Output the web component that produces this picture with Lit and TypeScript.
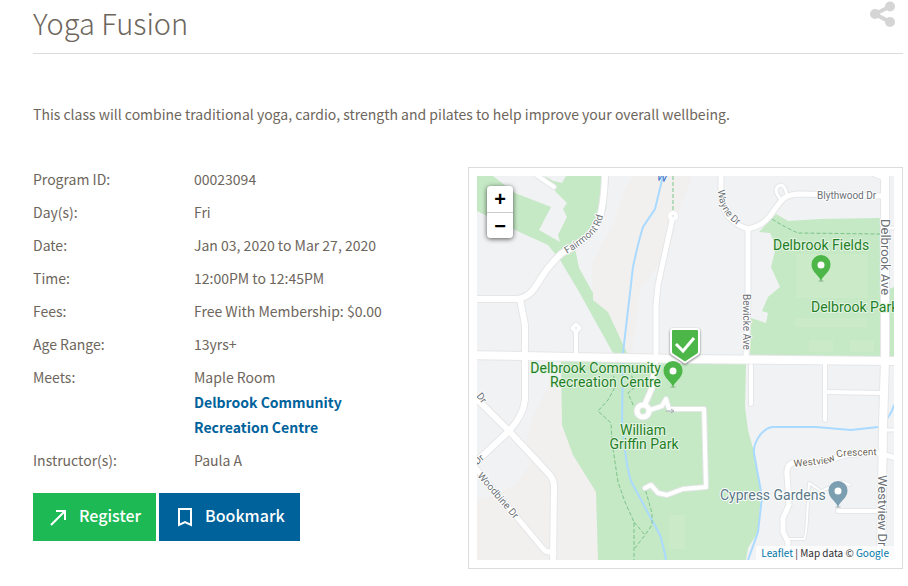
import { LitElement, html, css, svg } from "lit";
import { customElement, state } from "lit/decorators.js";

/* ---------- map data, in map units ---------- */

const terrain = [
  "632,176 622,197 612,227 592,262 592,300 608,312 627,353 632,353 640,290 660,262 676,220 692,176",
  "561,366 545,393 533,417 526,440 532,462 515,485 488,497 477,498 477,560 600,560 600,366",
];

const greens = [
  "477,176 493,176 515,193 551,207 539,230 560,242 558,235 563,225 567,217 563,209 567,203 555,191 545,176 553,181 562,183 566,176 609,176 606,210 595,232 575,248 579,268 593,293 593,300 608,312 627,353 613,353 578,290 560,260 548,245 515,230 477,211",
  "561,360 746,362 745,407 748,430 754,452 761,495 758,532 748,548 746,560 598,560 596,492 573,455 562,425",
  "776,214 788,221 820,219 881,218 881,358 750,358 751,318 766,323 768,313 762,311 768,297 780,287 771,267 776,247 770,233 759,232",
  "889,289 894,287 894,358 889,358",
];

const lawns = [
  { x: 795, y: 318, w: 72, h: 9 },
  { x: 796, y: 254, w: 72, h: 44 },
  { x: 809, y: 340, w: 24, h: 12 },
  { x: 850, y: 340, w: 24, h: 12 },
  { x: 669, y: 515, w: 16, h: 34 },
];

const rivers = [
  "M663,176 L655,209 L643,227 Q638,243 633,267 L623,353 L622,423 L625,450 Q628,475 632,483 L660,535 Q664,548 666,560",
  "M748,560 L758,532 L762,497 L754,453 Q753,445 760,435 Q767,427 773,427 L816,427 L851,430 L878,427 Q890,419 894,405",
];

const trails = [
  "M673,176 V212",
  "M772,219 Q786,228 798,233 L880,234",
  "M613,370 L615,387 L608,400 L598,411 L611,423 L612,442 L618,482 L625,502 L634,522 V560",
  "M634,522 L645,535 L635,548",
  "M644,485 L652,513 V525 L645,535",
  "M630,370 L635,387 L628,393 L634,407",
];

const roads = [
  { w: 4, d: "M529,170 L554,187" },
  { w: 4, d: "M576,353 V328" },
  { w: 5, d: "M673,216 L658,285 L656,305 L656,355 L652,388 L645,404" },
  { w: 5, d: "M637,411 a6,6 0 1 0 12,0 a6,6 0 1 0 -12,0" },
  { w: 4, d: "M650,410 L662,406 L666,399 L669,409 L704,409 L706,487 L683,489 L667,495 L658,493 L651,485 L645,488" },
  { w: 5, d: "M721,174 V193 Q723,212 730,218 Q738,226 748,229 V300 L746,357" },
  { w: 4, d: "M751,366 V404" },
  { w: 5, d: "M748,229 Q762,226 770,216 Q779,203 784,198 Q791,194 800,194 L883,196" },
  { w: 3, d: "M787,197 Q786,186 781,185 Q774,187 777,194 L781,200" },
  { w: 4, d: "M825,362 V420" },
  { w: 4, d: "M827,392 L883,393" },
  { w: 3, d: "M885,228 H896" },
  { w: 3, d: "M885,430 H896" },
  { w: 3, d: "M872,174 L884,179" },
  { w: 4, d: "M838,511 H881" },
  { w: 5, d: "M896,458 L875,452 L845,455 L820,463 L795,462 Q786,464 787,474 L789,505 L783,518 V532 L788,542 V564" },
  { w: 2, d: "M790,539 H804 Q806,538 807,518 L809,483 L821,491 L843,482 L850,485" },
  { w: 6, d: "M477,299 H518 Q528,297 534,289 L545,272 Q555,259 562,253 Q592,239 599,220 Q604,205 605,174" },
  { w: 6, d: "M520,299 L525,325 V400 Q523,416 509,431 L474,464" },
  { w: 6, d: "M474,396 L509,431 L550,475 Q554,480 554,487 L553,564" },
  { w: 5, d: "M474,466 L545,551 L554,553" },
  { w: 8, d: "M470,355 L625,358 L683,359 L900,361" },
  { w: 8, d: "M885,170 L885,360 L883,425 L881,564" },
];

const labelPaths = [
  { id: "fairmont", d: "M567,254 Q590,240 598,229 Q604,218 605,205" },
  { id: "wayne", d: "M718,190 Q719,206 727,216 Q735,226 748,230" },
  { id: "woodbine", d: "M477,476 L520,526" },
  { id: "crescent", d: "M794,467 L824,464 Q832,463 836,459 Q840,456 848,456 L880,455" },
];

const curved = [
  { path: "fairmont", text: "Fairmont Rd", size: 10, tone: "street" },
  { path: "wayne", text: "Wayne Dr", size: 10, tone: "street" },
  { path: "woodbine", text: "Woodbine Dr", size: 10, tone: "street" },
  { path: "crescent", text: "Westview Crescent", size: 10, tone: "brown" },
];

const straight = [
  { x: 817, y: 199, r: 0, size: 10, tone: "street", anchor: "start", text: "Blythwood Dr" },
  { x: 743, y: 294, r: 90, size: 10, tone: "street", anchor: "start", text: "Bewicke Ave" },
  { x: 881, y: 219, r: 90, size: 13, tone: "street", anchor: "start", text: "Delbrook Ave" },
  { x: 878, y: 475, r: 90, size: 13, tone: "street", anchor: "start", text: "Westview Dr" },
  { x: 656, y: 180, r: 12, size: 12, tone: "water", anchor: "start", text: "W" },
  { x: 773, y: 250, r: 0, size: 14, tone: "park", anchor: "start", text: "Delbrook Fields" },
  { x: 811, y: 312, r: 0, size: 14, tone: "park", anchor: "start", text: "Delbrook Park" },
  { x: 661, y: 373, r: 0, size: 14, tone: "park", anchor: "end", text: "Delbrook Community" },
  { x: 661, y: 387, r: 0, size: 14, tone: "park", anchor: "end", text: "Recreation Centre" },
  { x: 643, y: 435, r: 0, size: 14, tone: "park", anchor: "middle", text: "William" },
  { x: 644, y: 449, r: 0, size: 14, tone: "park", anchor: "middle", text: "Griffin Park" },
  { x: 720, y: 500, r: 0, size: 14, tone: "slate", anchor: "start", text: "Cypress Gardens" },
  { x: 476, y: 396, r: 52, size: 10, tone: "street", anchor: "start", text: "Dr" },
  { x: 481, y: 462, r: -42, size: 10, tone: "street", anchor: "middle", text: "Dr" },
];

const pins = [
  { x: 821, y: 265, fill: "#4cb648" },
  { x: 673, y: 371, fill: "#4cb648" },
  { x: 838, y: 491, fill: "#7b9eb0" },
];

@customElement("program-map")
export class ProgramMap extends LitElement {
  @state() private zoom = 0;

  static styles = css`
    :host {
      display: block;
      border: 1px solid #dcdcdc;
      padding: 8px;
    }
    .view {
      position: relative;
      overflow: hidden;
      height: 384px;
      background: #f1f2f4;
    }
    .tiles {
      display: block;
      width: 100%;
      height: 100%;
    }
    .terrain { fill: #f1f0ef; }
    .green { fill: #c5e8c5; }
    .lawn { fill: #cbeac8; }
    .river { fill: none; stroke: #aadaff; stroke-width: 2; }
    .trail { fill: none; stroke: #7cc48a; stroke-width: 1; stroke-dasharray: 4 2; }
    .casing { fill: none; stroke: #e5e6e8; stroke-linecap: round; stroke-linejoin: round; }
    .road { fill: none; stroke: #fff; stroke-linecap: round; stroke-linejoin: round; }
    .label {
      font-family: Roboto, sans-serif;
      paint-order: stroke;
      stroke: #fff;
      stroke-width: 2;
      stroke-linejoin: round;
    }
    .street { fill: #6b7075; }
    .brown { fill: #6b6458; }
    .water { fill: #3f76c8; stroke: none; }
    .park { fill: #1f7f25; stroke: #e6f5e5; }
    .slate { fill: #5a7888; }
    .badge { fill: #4cb748; stroke: #fff; stroke-width: 2; filter: drop-shadow(0 1px 1px rgba(0, 0, 0, 0.5)); }
    .tick { fill: none; stroke: #fff; stroke-width: 3; }
    .zoom {
      position: absolute;
      left: 10px;
      top: 10px;
      width: 26px;
      border-radius: 4px;
      overflow: hidden;
      box-shadow: 0 1px 5px rgba(0, 0, 0, 0.65);
    }
    .step {
      display: block;
      box-sizing: border-box;
      width: 26px;
      height: 26px;
      margin: 0;
      padding: 0;
      border: 0;
      background: #fff;
      color: #000;
      font: bold 20px/26px "Liberation Sans", Arial, sans-serif;
      text-align: center;
      cursor: pointer;
    }
    .step + .step { border-top: 1px solid #ccc; }
    .credit {
      position: absolute;
      right: 0;
      bottom: 0;
      padding: 0 5px;
      background: rgba(255, 255, 255, 0.7);
      color: #333;
      font: 10px/14px "Noto Sans CJK SC", sans-serif;
    }
    .credit a { color: #0078a8; text-decoration: none; }
  `;

  render() {
    const scale = `translate(685 368) scale(${Math.pow(2, this.zoom)}) translate(-685 -368)`;
    return html`
      <div class="view">
        <svg class="tiles" viewBox="477 176 417 384" preserveAspectRatio="xMidYMid slice" role="img" aria-label="Map of Delbrook Community Recreation Centre">
          <defs>${labelPaths.map((p) => svg`<path id=${p.id} d=${p.d}></path>`)}</defs>
          <g transform=${scale}>
            ${terrain.map((p) => svg`<polygon class="terrain" points=${p}></polygon>`)}
            ${greens.map((p) => svg`<polygon class="green" points=${p}></polygon>`)}
            ${lawns.map((l) => svg`<rect class="lawn" x=${l.x} y=${l.y} width=${l.w} height=${l.h}></rect>`)}
            ${rivers.map((d) => svg`<path class="river" d=${d}></path>`)}
            ${trails.map((d) => svg`<path class="trail" d=${d}></path>`)}
            ${roads.map((r) => svg`<path class="casing" stroke-width=${r.w + 2} d=${r.d}></path>`)}
            <circle class="casing" cx="673" cy="216" r="5"></circle>
            <path class="casing" stroke-width="2" d="M576,322 L582,328 L576,335 L570,328 Z"></path>
            ${roads.map((r) => svg`<path class="road" stroke-width=${r.w} d=${r.d}></path>`)}
            <circle cx="673" cy="216" r="5" fill="#fff"></circle>
            <circle cx="673" cy="216" r="1" fill="#e2e3e5"></circle>
            <path fill="#fff" d="M576,322 L582,328 L576,335 L570,328 Z"></path>
            <circle cx="576" cy="328" r="1" fill="#e2e3e5"></circle>
            <path d="M666,411 H674 M671,409 L674,411 L671,413" fill="none" stroke="#a5acb3"></path>
            ${straight.map((t) => svg`<text class="label ${t.tone}" font-size=${t.size} text-anchor=${t.anchor} transform="translate(${t.x} ${t.y}) rotate(${t.r})">${t.text}</text>`)}
            ${curved.map((t) => svg`<text class="label ${t.tone}" font-size=${t.size}><textPath href="#${t.path}">${t.text}</textPath></text>`)}
            ${pins.map((p) => svg`
              <g transform="translate(${p.x} ${p.y})">
                <ellipse cx="0" cy="16" rx="3" ry="1" fill="rgba(0,0,0,0.15)"></ellipse>
                <path fill=${p.fill} d="M0,17 C-1,10 -9.500,8 -9.500,-0.500 A9.500,9.500 0 0 1 9.500,-0.500 C9.500,8 1,10 0,17 Z"></path>
                <circle r="3.500" fill="#fff"></circle>
              </g>`)}
            <path class="badge" d="M673,329 H697 Q699,329 699,331 V352 Q699,353 698,354 L686,362 Q685,363 684,362 L672,354 Q671,353 671,352 V331 Q671,329 673,329 Z"></path>
            <path class="tick" d="M676,344 L683,351 L694,338"></path>
          </g>
        </svg>
        <div class="zoom">
          <button class="step" aria-label="Zoom in" @click=${() => (this.zoom = Math.min(3, this.zoom + 1))}>+</button>
          <button class="step" aria-label="Zoom out" @click=${() => (this.zoom = Math.max(0, this.zoom - 1))}>−</button>
        </div>
        <div class="credit"><a href="#leaflet">Leaflet</a> | Map data © <a href="#google">Google</a></div>
      </div>
    `;
  }
}

const details = [
  ["Program ID:", "00023094"],
  ["Day(s):", "Fri"],
  ["Date:", "Jan 03, 2020 to Mar 27, 2020"],
  ["Time:", "12:00PM to 12:45PM"],
  ["Fees:", "Free With Membership: $0.00"],
  ["Age Range:", "13yrs+"],
  ["Meets:", html`Maple Room<a class="place" href="#centre">Delbrook Community Recreation Centre</a>`],
  ["Instructor(s):", "Paula A"],
];

@customElement("app-root")
export class AppRoot extends LitElement {
  static styles = css`
    :host {
      display: block;
      padding: 0 5px 16px 33px;
      background: #fff;
      color: #6d665c;
      font: 14px/25px "Noto Sans CJK SC", sans-serif;
    }
    .head {
      display: flex;
      justify-content: space-between;
      align-items: flex-start;
      height: 53px;
      border-bottom: 1px solid #dcdcdc;
    }
    .title {
      margin: 0;
      font-size: 29px;
      line-height: 44px;
      font-weight: 300;
    }
    .share {
      margin: 0 6px 0 0;
      padding: 0;
      border: 0;
      background: none;
      cursor: pointer;
    }
    .share svg { display: block; }
    .intro { margin: 48px 0 40px; }
    .columns {
      display: grid;
      grid-template-columns: 1fr 1fr;
      align-items: start;
    }
    .facts {
      display: grid;
      grid-template-columns: 161px 1fr;
      row-gap: 8px;
      margin: 0 64px 20px 0;
    }
    .facts dt, .facts dd { margin: 0; }
    .place {
      display: block;
      color: #00629b;
      font-weight: 700;
      text-decoration: none;
    }
    .actions { display: flex; gap: 3px; }
    .action {
      display: flex;
      align-items: center;
      gap: 8px;
      height: 48px;
      margin: 0;
      padding: 0 15px 3px 14px;
      border: 0;
      color: #fff;
      font: 500 16px/25px "Noto Sans CJK SC", sans-serif;
      cursor: pointer;
    }
    .action svg { margin-top: 3px; }
    .register { background: #1db954; }
    .bookmark { background: #00629b; }
  `;

  render() {
    return html`
      <header class="head">
        <h1 class="title">Yoga Fusion</h1>
        <button class="share" aria-label="Share">
          <svg width="28" height="28" viewBox="0 0 28 28" fill="#d5d5d5">
            <path d="M6,14 L21,6.500 M6,14 L21,22" stroke="#d5d5d5" stroke-width="4"></path>
            <circle cx="6" cy="14" r="5"></circle>
            <circle cx="21" cy="6.500" r="5"></circle>
            <circle cx="21" cy="22" r="5"></circle>
          </svg>
        </button>
      </header>
      <p class="intro">This class will combine traditional yoga, cardio, strength and pilates to help improve your overall wellbeing.</p>
      <div class="columns">
        <section>
          <dl class="facts">${details.map(([k, v]) => html`<dt>${k}</dt><dd>${v}</dd>`)}</dl>
          <div class="actions">
            <button class="action register">
              <svg width="24" height="24" viewBox="0 0 24 24" fill="none" stroke="#fff" stroke-width="2">
                <path d="M4,20 L18,6 M9,6 H18 V15"></path>
              </svg>
              Register
            </button>
            <button class="action bookmark">
              <svg width="24" height="24" viewBox="0 0 24 24" fill="none" stroke="#fff" stroke-width="2">
                <path d="M6,4 H18 V20 L12,17 L6,20 Z"></path>
              </svg>
              Bookmark
            </button>
          </div>
        </section>
        <program-map></program-map>
      </div>
    `;
  }
}
